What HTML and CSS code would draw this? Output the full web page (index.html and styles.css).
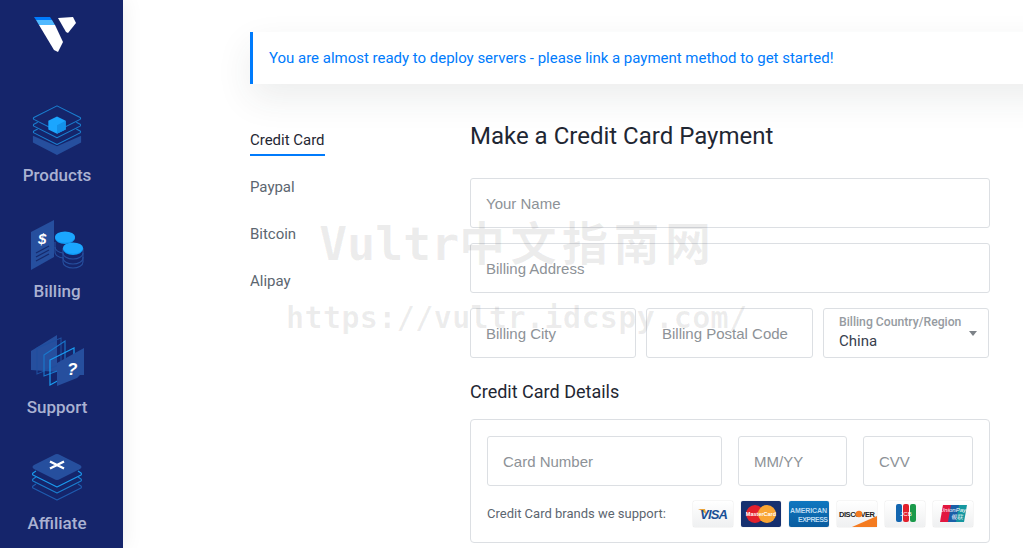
FILE: index.html
```html
<!DOCTYPE html>
<html lang="en">
<head>
  <meta charset="UTF-8" />
  <meta name="viewport" content="width=device-width, initial-scale=1.0"/>
  <title>Make a Credit Card Payment</title>
  <link rel="stylesheet" href="styles.css">
</head>
<body>
  <div class="page">
    <nav class="sidebar">
      <svg class="logo" width="50" height="38" viewBox="0 0 50 38">
        <polygon points="6,9 22,9 30,26 25,36 21,34" fill="#fff"/>
        <polygon points="3,4 19,4 22,9 6,9" fill="#51b9ff"/>
        <polygon points="1,1 17,1 19,4 3,4" fill="#007bfc"/>
        <polygon points="25,2 40,1 43,7 35,17 33,16" fill="#fff"/>
      </svg>

      <a class="nav-item">
        <svg width="54" height="56" viewBox="0 0 54 56">
          <polygon points="27,55 2,42 2,35 27,46 52,35 52,42" fill="#264f9e"/>
          <g fill="none" stroke="#1a7fd0" stroke-width="1.100" stroke-linejoin="round">
            <path d="M27 4 L51 16 Q52 17 51 18 L27 30 L3 18 Q2 17 3 16 Z"/>
            <path d="M7 21 L3 23 Q2 24 3 25 L27 37 L51 25 Q52 24 51 23 L47 21"/>
            <path d="M7 28 L3 30 Q2 31 3 32 L27 44 L51 32 Q52 31 51 30 L47 28"/>
          </g>
          <polygon points="27,15 36,19.500 36,28.500 27,33 18,28.500 18,19.500" fill="#1ba6ff"/>
          <polygon points="27,24 36,19.500 36,28.500 27,33" fill="#1391ea"/>
        </svg>
        <span>Products</span>
      </a>

      <a class="nav-item billing">
        <svg width="54" height="52" viewBox="0 0 54 52">
          <polygon points="1,14 24,2 24,39 1,52" fill="#264f9e"/>
          <text class="icon-glyph" x="8" y="26" font-size="15">$</text>
          <g stroke="#16296b" stroke-width="1.200">
            <line x1="6" y1="35" x2="19" y2="28"/>
            <line x1="6" y1="39" x2="19" y2="32"/>
            <line x1="6" y1="43" x2="19" y2="36"/>
          </g>
          <g fill="none" stroke="#264f9e" stroke-width="1.100">
            <path d="M25 24 v5 a10 6 0 0 0 8 6"/>
            <path d="M25 29 v5 a10 6 0 0 0 8 6"/>
            <path d="M33 30 v5 a10 6 0 0 0 20 0 v-5"/>
            <path d="M33 35 v5 a10 6 0 0 0 20 0 v-5"/>
            <path d="M33 39 v5 a10 6 0 0 0 20 0 v-5"/>
          </g>
          <ellipse cx="35" cy="20" rx="10" ry="6" fill="#0f9bf5"/>
          <ellipse cx="35" cy="19" rx="10" ry="5.500" fill="#1ba6ff"/>
          <ellipse cx="43" cy="31" rx="10" ry="6" fill="#0f9bf5"/>
          <ellipse cx="43" cy="30" rx="10" ry="5.500" fill="#1ba6ff"/>
        </svg>
        <span>Billing</span>
      </a>

      <a class="nav-item">
        <svg width="54" height="54" viewBox="0 0 54 54">
          <polygon points="1,17 27,1 27,38 1,36" fill="#264f9e"/>
          <polygon points="7,14 31,4 31,30 7,40" fill="none" stroke="#1f4f9f" stroke-width="1.100"/>
          <polygon points="14,21 35,7 35,34 14,42" fill="none" stroke="#1a78cc" stroke-width="1.100"/>
          <polygon points="20,26 44,14 44,38 20,51" fill="none" stroke="#1a9cf0" stroke-width="1.200"/>
          <polygon points="27,29 54,14 54,41 50,41 47,44 27,52" fill="#264f9e"/>
          <text class="icon-glyph" x="37" y="41" font-size="17">?</text>
        </svg>
        <span>Support</span>
      </a>

      <a class="nav-item">
        <svg width="54" height="50" viewBox="0 0 54 50">
          <g fill="none" stroke-width="1.100" stroke-linejoin="round">
            <path d="M6 17 L3 19 Q2 20 3 21 L27 33 L51 21 Q52 20 51 19 L48 17" stroke="#1a9cf0"/>
            <path d="M6 23 L3 25 Q2 26 3 27 L27 39 L51 27 Q52 26 51 25 L48 23" stroke="#1a7fd0"/>
            <path d="M6 30 L3 32 Q2 33 3 34 L27 46 L51 34 Q52 33 51 32 L48 30" stroke="#1f5cb0"/>
          </g>
          <path d="M24 1 Q27 -1 30 1 L50 11 Q53 13 50 15 L30 25 Q27 27 24 25 L4 15 Q1 13 4 11 Z" fill="#264f9e"/>
          <path d="M20 7.500 L34 14.500 M34 7.500 L20 14.500" stroke="#fff" stroke-width="2.400"/>
        </svg>
        <span>Affiliate</span>
      </a>
    </nav>

    <main class="main">
      <div class="alert">You are almost ready to deploy servers - please link a payment method to get started!</div>

      <div class="content">
        <ul class="tabs">
          <li class="tab active">Credit Card</li>
          <li class="tab">Paypal</li>
          <li class="tab">Bitcoin</li>
          <li class="tab">Alipay</li>
        </ul>

        <form class="pay-form">
          <h1>Make a Credit Card Payment</h1>
          <input class="field" type="text" placeholder="Your Name">
          <input class="field" type="text" placeholder="Billing Address">
          <div class="field-row">
            <input class="field city" type="text" placeholder="Billing City">
            <input class="field postal" type="text" placeholder="Billing Postal Code">
            <div class="field region">
              <label>Billing Country/Region</label>
              <div class="region-value">China</div>
              <i class="caret"></i>
            </div>
          </div>

          <h2>Credit Card Details</h2>
          <div class="card-box">
            <div class="card-row">
              <input class="field number" type="text" placeholder="Card Number">
              <input class="field expiry" type="text" placeholder="MM/YY">
              <input class="field cvv" type="text" placeholder="CVV">
            </div>
            <div class="brands">
              <span class="brands-note">Credit Card brands we support:</span>
              <div class="brand-list">
                <div class="brand">
                  <svg width="40" height="26" viewBox="0 0 40 26">
                    <path d="M5 8 L12 8 L14 15 Q11 10 5 8 Z" fill="#e9a33b"/>
                    <text x="7" y="18" textLength="28" class="visa-text">VISA</text>
                  </svg>
                </div>
                <div class="brand mc">
                  <svg width="40" height="26" viewBox="0 0 40 26">
                    <circle cx="14" cy="13" r="9" fill="#e3202c"/>
                    <circle cx="26" cy="13" r="9" fill="#f9a533"/>
                    <text x="20" y="15" class="mc-text">MasterCard</text>
                  </svg>
                </div>
                <div class="brand amex">
                  <svg width="40" height="26" viewBox="0 0 40 26">
                    <text x="1" y="12" textLength="37" class="amex-text">AMERICAN</text>
                    <text x="9" y="21" textLength="30" class="amex-text">EXPRESS</text>
                  </svg>
                </div>
                <div class="brand">
                  <svg width="40" height="26" viewBox="0 0 40 26">
                    <path d="M15 26 L40 15 L40 26 Z" fill="#f47b20"/>
                    <text x="2" y="16" textLength="36" class="disc-text">DISCOVER</text>
                    <circle cx="22" cy="13" r="3.200" fill="#f47b20"/>
                  </svg>
                </div>
                <div class="brand">
                  <svg width="40" height="26" viewBox="0 0 40 26">
                    <rect x="11" y="3" width="6" height="18" rx="2" fill="#1366b0"/>
                    <rect x="18" y="3" width="6" height="18" rx="2" fill="#e2202c"/>
                    <rect x="25" y="3" width="6" height="18" rx="2" fill="#1b9a4b"/>
                    <text x="21" y="15" class="jcb-text">JCB</text>
                  </svg>
                </div>
                <div class="brand">
                  <svg width="40" height="26" viewBox="0 0 40 26">
                    <path d="M10 4 H21 L18 21 H7 Z" fill="#e2163f"/>
                    <path d="M18 4 H28 L25 21 H15 Z" fill="#1a5fa8"/>
                    <path d="M26 4 H34 L31 21 H23 Z" fill="#1597a0"/>
                    <text x="20" y="11" class="up-text">UnionPay</text>
                    <text x="24" y="18" class="up-text">银联</text>
                  </svg>
                </div>
              </div>
            </div>
          </div>
        </form>
      </div>
    </main>

    <div class="wm wm-name"><span class="wm-latin">Vultr</span>中文指南网</div>
    <div class="wm wm-url">https://vultr.idcspy.com/</div>
  </div>
</body>
</html>
```

FILE: styles.css
```css
html, body {
  margin: 0;
  height: 100%;
  overflow: hidden;
}
body {
  font-family: Roboto, 'Liberation Sans', sans-serif;
  background-color: #fff;
  color: #1f2733;
}
.page {
  position: relative;
  display: flex;
  height: 548px;
  overflow: hidden;
}

/* sidebar */
.sidebar {
  width: 123px;
  flex: none;
  height: 548px;
  background: #15256b;
  box-shadow: 0 0 20px rgba(0,0,0,0.08);
  padding: 16px 9px 0 0;
  box-sizing: border-box;
  display: flex;
  flex-direction: column;
  align-items: center;
}
.logo {
  display: block;
  margin-bottom: 48px;
  margin-left: 2px;
}
.nav-item {
  display: flex;
  flex-direction: column;
  align-items: center;
  justify-content: flex-end;
  height: 116px;
  width: 100%;
  flex: none;
  color: #aab2d2;
  font-size: 17px;
  font-weight: 500;
  line-height: 20px;
}
.nav-item:first-of-type {
  height: 83px;
}
.nav-item svg {
  display: block;
  margin-bottom: 9px;
}
.nav-item.billing svg {
  margin-bottom: 11px;
}
.icon-glyph {
  fill: #fff;
  font-family: 'Liberation Sans', sans-serif;
  font-weight: 700;
  font-style: italic;
}

/* main */
.main {
  flex: 1;
  min-width: 0;
  padding: 32px 0 0 127px;
}
.alert {
  width: 900px;
  height: 52px;
  box-sizing: border-box;
  line-height: 52px;
  border-left: 3px solid #007bfc;
  padding-left: 16px;
  background: #fff;
  color: #007bfc;
  font-size: 15px;
  letter-spacing: -0.015px;
  box-shadow: 0 14px 36px rgba(40,50,60,0.09);
}
.content {
  display: flex;
  margin-top: 35px;
}
.tabs {
  list-style: none;
  margin: 0;
  padding: 12px 0 0;
  width: 220px;
  flex: none;
}
.tab {
  width: max-content;
  height: 47px;
  box-sizing: border-box;
  font-size: 15px;
  line-height: 18px;
  letter-spacing: -0.02px;
  color: #5c6670;
}
.tab.active {
  color: #1f2733;
}
.tab.active::after {
  content: "";
  display: block;
  height: 2px;
  margin-top: 5px;
  background: #007bfc;
}

/* form */
.pay-form {
  width: 520px;
  flex: none;
}
.pay-form h1 {
  margin: 0 0 25px;
  font-size: 24px;
  font-weight: 400;
  line-height: 34px;
  color: #1f2733;
}
.pay-form h2 {
  margin: 23px 0 17px;
  font-size: 18px;
  font-weight: 400;
  line-height: 21px;
  color: #1f2733;
}
.field {
  display: block;
  width: 100%;
  height: 50px;
  box-sizing: border-box;
  margin: 0 0 15px;
  padding: 0 15px;
  border: 1px solid #dcdfe3;
  border-radius: 3px;
  background: transparent;
  font-family: 'Liberation Sans', Arial, sans-serif;
  font-size: 15px;
  color: #1f2733;
}
.field::placeholder {
  color: #8d9297;
  opacity: 1;
}
.field-row, .card-row {
  display: flex;
}
.field-row .field, .card-row .field {
  margin-bottom: 0;
}
.city { width: 166px; margin-right: 10px; }
.postal { width: 167px; margin-right: 10px; }
.region {
  position: relative;
  width: 166px;
  font-family: Roboto, sans-serif;
}
.region label {
  display: block;
  margin-top: 6px;
  font-size: 12.200px;
  font-weight: 500;
  line-height: 15px;
  color: #969ba1;
}
.region-value {
  font-size: 15px;
  line-height: 20px;
  margin-top: 1px;
  color: #37404d;
}
.caret {
  position: absolute;
  right: 11px;
  top: 22px;
  border-left: 4px solid transparent;
  border-right: 4px solid transparent;
  border-top: 5px solid #7d8288;
}
.card-box {
  height: 124px;
  box-sizing: border-box;
  border: 1px solid #dcdfe3;
  border-radius: 4px;
  padding: 16px 16px 0;
}
.number { width: 235px; margin-right: 16px; }
.expiry { width: 109px; margin-right: 16px; }
.cvv { width: 110px; }
.brands {
  display: flex;
  align-items: center;
  justify-content: space-between;
  margin-top: 15px;
}
.brands-note {
  font-size: 13px;
  padding-bottom: 2px;
  color: #5c6670;
}
.brand-list {
  display: flex;
  gap: 8px;
}
.brand {
  width: 40px;
  height: 26px;
  border-radius: 2px;
  background: linear-gradient(#ffffff, #eff0f1);
  box-shadow: 0 0 1px rgba(0,0,0,0.35);
}
.brand svg {
  display: block;
}
.brand.mc { background: #16306f; }
.brand.amex { background: linear-gradient(#0f77c0, #0a5c9f); }
.brand text {
  font-family: 'Liberation Sans', sans-serif;
}
.visa-text {
  font-size: 13px;
  font-weight: 700;
  font-style: italic;
  fill: #1a4f95;
}
.mc-text {
  font-size: 5.500px;
  font-weight: 700;
  fill: #fff;
  text-anchor: middle;
}
.amex-text {
  font-size: 7px;
  font-weight: 700;
  fill: #bcdcf3;
}
.disc-text {
  font-size: 7.500px;
  font-weight: 700;
  fill: #222;
}
.jcb-text {
  font-size: 6px;
  fill: #fff;
  text-anchor: middle;
}
.up-text {
  font-size: 6px;
  font-style: italic;
  fill: #fff;
  text-anchor: middle;
  font-family: 'Liberation Sans', 'Noto Sans CJK SC', sans-serif;
}

/* watermark over the page */
.wm {
  position: absolute;
  white-space: nowrap;
  color: rgba(60,60,60,0.09);
  pointer-events: none;
}
.wm-name {
  left: 319px;
  top: 211px;
  font-family: 'Noto Sans CJK SC', sans-serif;
  font-weight: 700;
  font-size: 46px;
  line-height: 58px;
  letter-spacing: 5.500px;
}
.wm-latin {
  font-family: 'DejaVu Sans Mono', monospace;
  font-size: 47px;
  letter-spacing: -0.300px;
}
.wm-url {
  left: 286px;
  top: 299px;
  font-family: 'DejaVu Sans Mono', monospace;
  font-weight: 700;
  font-size: 30px;
  line-height: 38px;
  letter-spacing: 0.400px;
}
```
